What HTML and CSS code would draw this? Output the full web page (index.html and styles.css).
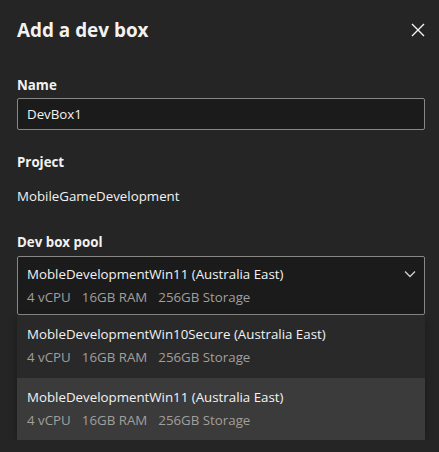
FILE: index.html
```html
<!DOCTYPE html>
<html>
<head>
<meta charset="utf-8">
<link rel="stylesheet" href="styles.css">
</head>
<body>
<div class="panel">
  <div class="header">
    <h1 class="title">Add a dev box</h1>
    <button class="close" aria-label="Close">
      <svg width="14" height="14" viewBox="0 0 14 14"><path d="M1 1 L13 13 M13 1 L1 13" stroke="#f3f2f1" stroke-width="1.4" fill="none"/></svg>
    </button>
  </div>

  <div class="field">
    <div class="label">Name</div>
    <div class="input">DevBox1</div>
  </div>

  <div class="field">
    <div class="label">Project</div>
    <div class="value">MobileGameDevelopment</div>
  </div>

  <div class="field">
    <div class="label pool-label">Dev box pool</div>
    <div class="dropdown">
      <div class="select">
        <div class="opt-text">
          <div class="opt-name">MobleDevelopmentWin11 (Australia East)</div>
          <div class="opt-spec"><span>4 vCPU</span><span>16GB RAM</span><span>256GB Storage</span></div>
        </div>
        <svg class="chev" width="12" height="8" viewBox="0 0 12 8"><path d="M1 1.5 L6 6.5 L11 1.5" stroke="#d0cfce" stroke-width="1.3" fill="none"/></svg>
      </div>
      <div class="list">
        <div class="option">
          <div class="opt-name">MobleDevelopmentWin10Secure (Australia East)</div>
          <div class="opt-spec"><span>4 vCPU</span><span>16GB RAM</span><span>256GB Storage</span></div>
        </div>
        <div class="option selected">
          <div class="opt-name">MobleDevelopmentWin11 (Australia East)</div>
          <div class="opt-spec"><span>4 vCPU</span><span>16GB RAM</span><span>256GB Storage</span></div>
        </div>
      </div>
    </div>
  </div>
</div>
</body>
</html>
```

FILE: styles.css
```css
html, body {
  margin: 0;
  padding: 0;
  background: #252525;
}
body {
  font-family: "Open Sans", "Noto Sans", sans-serif;
  color: #f3f2f1;
  font-size: 13.3px;
}
.panel {
  padding: 12px 14px 0 17px;
}
.header {
  display: flex;
  align-items: center;
  justify-content: space-between;
  height: 35px;
}
.title {
  margin: 0;
  font-size: 18.9px;
  font-weight: 700;
  line-height: 28px;
}
.close {
  background: none;
  border: none;
  padding: 0;
  width: 14px;
  height: 14px;
  display: flex;
}
.field {
  margin-top: 28px;
}
.field + .field {
  margin-top: 22px;
}
.label {
  font-weight: 700;
  line-height: 20px;
  margin-bottom: 3px;
}
.pool-label {
  margin-bottom: 4px;
}
.input {
  border: 1px solid #8a8886;
  background: #1b1b1b;
  height: 30px;
  line-height: 30px;
  padding: 0 9px;
  border-radius: 2px;
}
.value {
  line-height: 20px;
  padding-top: 11px;
  padding-bottom: 4px;
}
.dropdown {
  position: relative;
}
.select {
  border: 1px solid #8a8886;
  background: #1b1b1b;
  border-radius: 2px;
  display: flex;
  justify-content: space-between;
  padding: 5px 8px 6px 9px;
}
.chev {
  margin-top: 8px;
}
.opt-name {
  line-height: 24px;
}
.opt-spec {
  color: #a19f9d;
  line-height: 22px;
  display: flex;
  gap: 11px;
}
.list {
  background: #292929;
  box-shadow: 0 4px 8px rgba(0,0,0,0.3);
  border-radius: 0 0 2px 2px;
}
.option {
  padding: 7px 10px 10px 10px;
}
.option.selected {
  background: #3b3b3b;
  padding-bottom: 9px;
}
```
